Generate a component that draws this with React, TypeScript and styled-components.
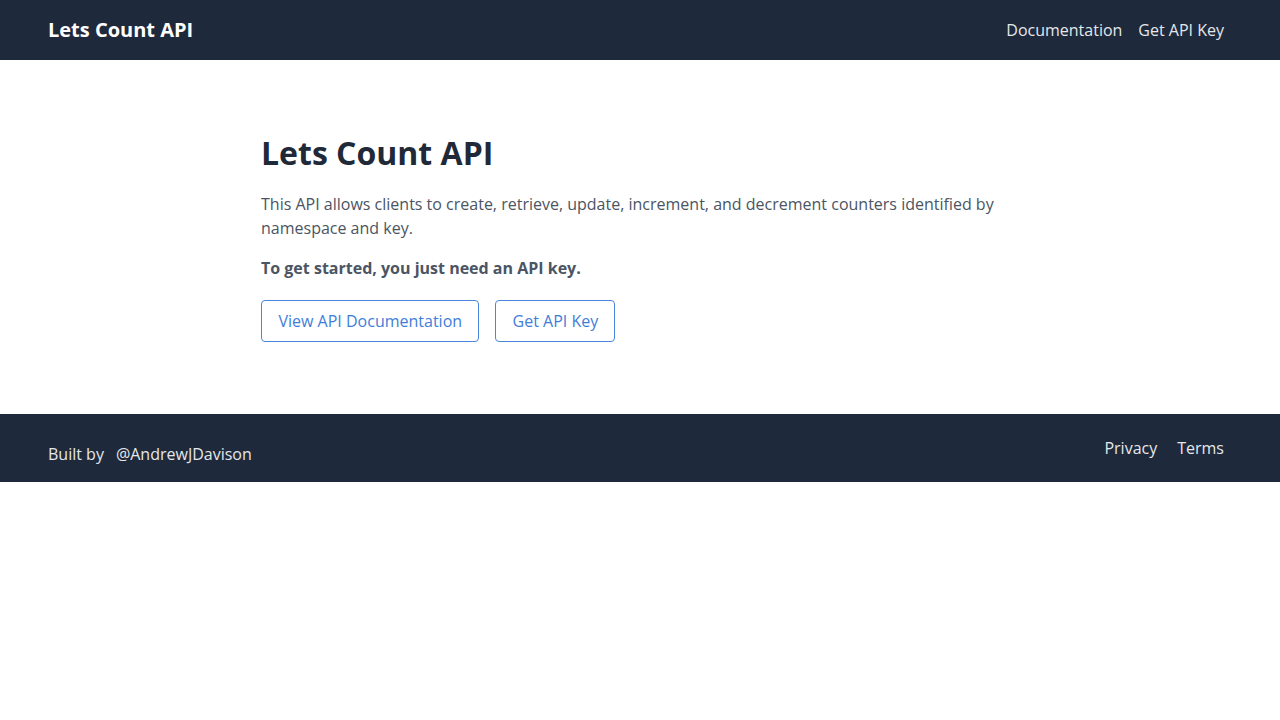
import React from "react";
import styled, { createGlobalStyle } from "styled-components";

const Global = createGlobalStyle`
  html, body { margin: 0; padding: 0; background: #ffffff; }
  body { font-family: "Open Sans", "Noto Sans", sans-serif; -webkit-font-smoothing: antialiased; }
  * { box-sizing: border-box; }
`;

const Header = styled.header`
  height: 60px;
  background: #1e293b;
  display: flex;
  align-items: center;
  justify-content: space-between;
  padding: 0 56px 0 48px;
`;

const Brand = styled.div`
  color: #ffffff;
  font-size: 20px;
  font-weight: 700;
  line-height: 28px;
`;

const Nav = styled.nav`
  display: flex;
  gap: 16px;
`;

const NavLink = styled.a`
  color: #e5e7eb;
  font-size: 16px;
  line-height: 24px;
  text-decoration: none;
`;

const Main = styled.main`
  padding: 73px 0 72px;
`;

const Container = styled.div`
  width: 758px;
  margin: 0 auto;
`;

const Title = styled.h1`
  margin: 0 0 19px;
  font-size: 32px;
  line-height: 40px;
  font-weight: 700;
  color: #1f2937;
`;

const Text = styled.p<{ $bold?: boolean }>`
  margin: 0 0 16px;
  font-size: 16px;
  line-height: 24px;
  color: #4b5563;
  font-weight: ${(p) => (p.$bold ? 700 : 400)};
`;

const Buttons = styled.div`
  display: flex;
  gap: 16px;
  margin-top: 20px;
`;

const Button = styled.a`
  display: inline-flex;
  align-items: center;
  height: 42px;
  padding: 0 16px 0 16.5px;
  border: 1px solid #4a86dc;
  border-radius: 4px;
  color: #3f7ed8;
  font-size: 16px;
  text-decoration: none;
`;

const Footer = styled.footer`
  height: 68px;
  background: #1e293b;
  display: flex;
  align-items: center;
  justify-content: space-between;
  padding: 0 56px 0 48px;
`;

const Credit = styled.div`
  display: flex;
  gap: 12px;
  padding-top: 12px;
  color: #e5e7eb;
  font-size: 16px;
  line-height: 24px;
`;

const FooterLinks = styled.div`
  display: flex;
  gap: 20px;
`;

const FooterLink = styled.a`
  color: #e5e7eb;
  font-size: 16px;
  line-height: 24px;
  text-decoration: none;
`;

export default function App() {
  return (
    <>
      <Global />
      <Header>
        <Brand>Lets Count API</Brand>
        <Nav>
          <NavLink href="#">Documentation</NavLink>
          <NavLink href="#">Get API Key</NavLink>
        </Nav>
      </Header>
      <Main>
        <Container>
          <Title>Lets Count API</Title>
          <Text>
            This API allows clients to create, retrieve, update, increment, and decrement counters
            identified by namespace and key.
          </Text>
          <Text $bold>To get started, you just need an API key.</Text>
          <Buttons>
            <Button href="#">View API Documentation</Button>
            <Button href="#">Get API Key</Button>
          </Buttons>
        </Container>
      </Main>
      <Footer>
        <Credit>
          <span>Built by</span>
          <span>@AndrewJDavison</span>
        </Credit>
        <FooterLinks>
          <FooterLink href="#">Privacy</FooterLink>
          <FooterLink href="#">Terms</FooterLink>
        </FooterLinks>
      </Footer>
    </>
  );
}
